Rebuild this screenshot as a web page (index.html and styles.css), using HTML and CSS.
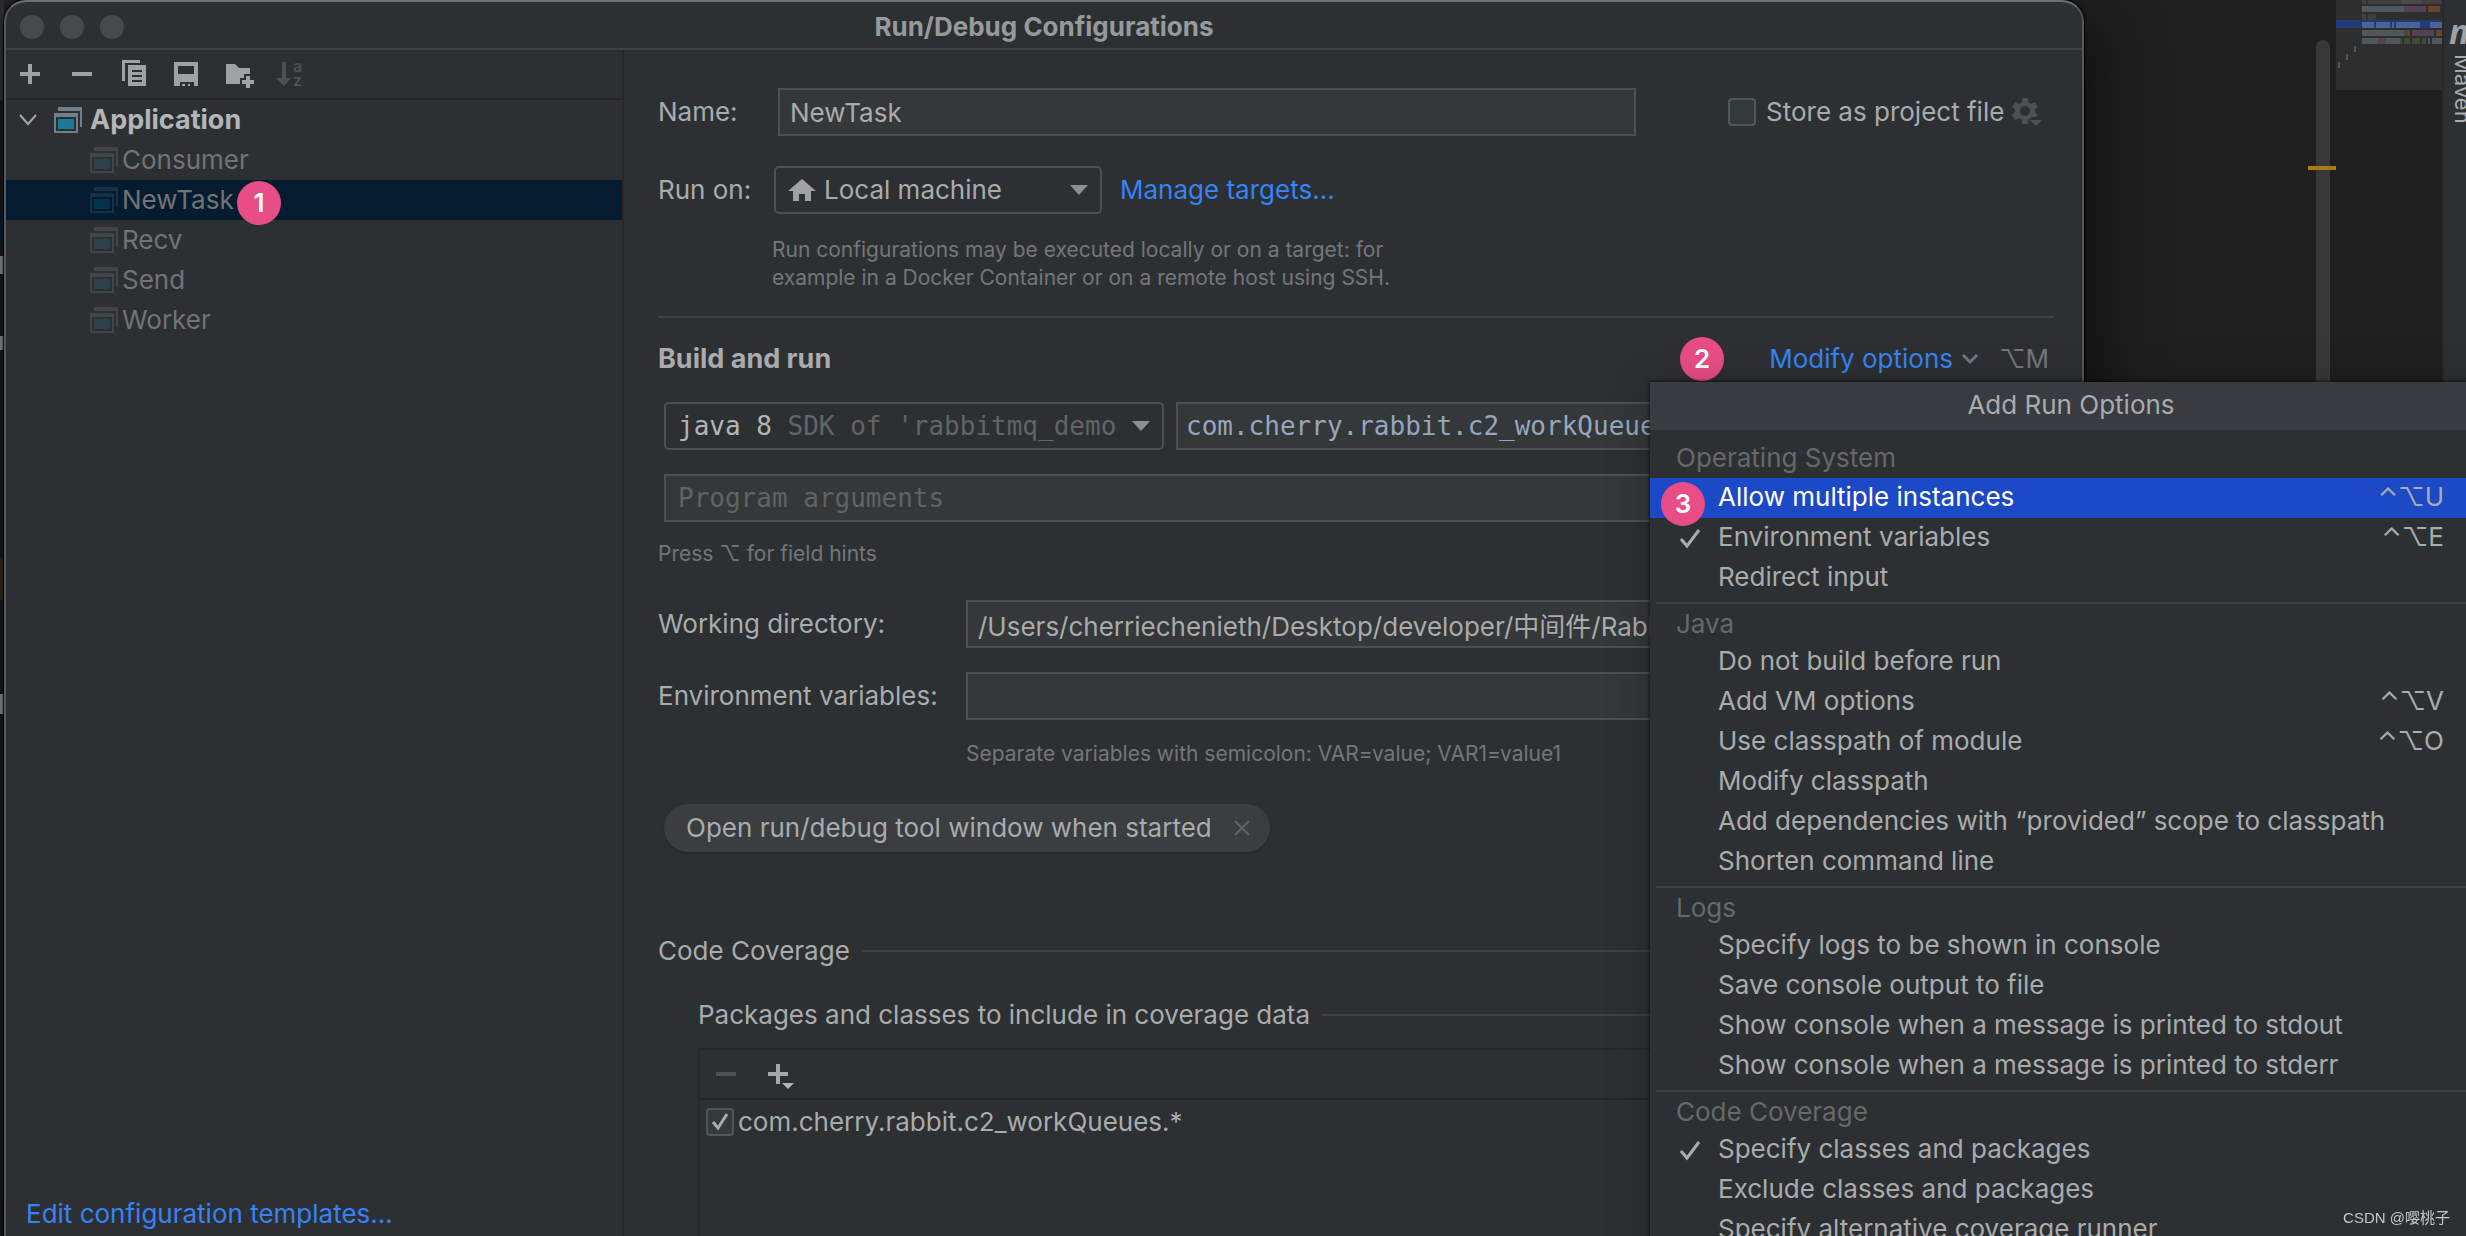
FILE: index.html
```html
<!DOCTYPE html>
<html lang="en">
<head>
<meta charset="utf-8">
<title>Run/Debug Configurations</title>
<link rel="stylesheet" href="styles.css">
</head>
<body>
<svg class="defs" aria-hidden="true">
  <symbol id="app" viewBox="0 0 28 26">
    <path class="frame" d="M4 0h24v20h-2V4H4z"/>
    <path class="frame" fill-rule="evenodd" d="M0 6h24v20H0zM2 10v14h20V10z"/>
    <path class="pane" d="M4 12h16v10H4z"/>
  </symbol>
  <symbol id="arrow" viewBox="0 0 18 10"><path fill="currentColor" d="M0 0h18L9 10z"/></symbol>
  <symbol id="tick" viewBox="0 0 20 20"><path fill="none" stroke="currentColor" stroke-width="3" d="M1 10l6 7L19 1"/></symbol>
</svg>
<div class="desktop">
  <div class="editor-left"></div>
  <main class="dialog">
    <header class="titlebar">
      <div class="lights"><i></i><i></i><i></i></div>
      <h1>Run/Debug Configurations</h1>
    </header>
    <div class="columns">
      <aside class="sidebar">
        <div class="toolbar">
          <button type="button" aria-label="Add"><svg width="28" height="28" viewBox="0 0 28 28"><path fill="#9fa1a3" d="M12 4h4v8h8v4h-8v8h-4v-8H4v-4h8z"/></svg></button>
          <button type="button" aria-label="Remove"><svg width="28" height="28" viewBox="0 0 28 28"><path fill="#9fa1a3" d="M4 12h20v4H4z"/></svg></button>
          <button type="button" aria-label="Copy"><svg width="28" height="28" viewBox="0 0 28 28"><path fill="#9fa1a3" d="M2 0h18v3H5v18H2z"/><path fill="#9fa1a3" fill-rule="evenodd" d="M8 5h18v21H8zM12 10v2h10v-2zM12 15v2h10v-2zM12 20v2h10v-2z"/></svg></button>
          <button type="button" aria-label="Save"><svg width="28" height="28" viewBox="0 0 28 28"><path fill="#9fa1a3" fill-rule="evenodd" d="M2 2h24v24h-4v-4H8v4H2zM6 6v8h16V6z"/><path fill="#9fa1a3" d="M10 24h3v2h-3zM16 24h2v2h-2z"/></svg></button>
          <button type="button" aria-label="New folder"><svg width="28" height="28" viewBox="0 0 28 28"><path fill="#9fa1a3" d="M2 4h9l4 4h11v6h-6v4h-4v6H2z"/><path fill="#9fa1a3" d="M22 16h4v4h4v4h-4v4h-4v-4h-4v-4h4z"/></svg></button>
          <button type="button" aria-label="Sort" disabled><svg width="28" height="28" viewBox="0 0 28 28"><path fill="#4d4f50" d="M6 2h4v16h5L8 26 0 18h6z"/><text x="17" y="12" class="sort-letter">a</text><text x="17" y="26" class="sort-letter">z</text></svg></button>
        </div>
        <ul class="tree">
          <li class="root"><svg class="chev" width="18" height="12" viewBox="0 0 18 12"><path fill="none" stroke="#a5a7a8" stroke-width="2" d="M1 1l8 9 8-9"/></svg><svg class="icon" width="28" height="26"><use href="#app"/></svg><span>Application</span></li>
          <li><svg class="icon" width="28" height="26"><use href="#app"/></svg><span>Consumer</span></li>
          <li class="selected"><svg class="icon" width="28" height="26"><use href="#app"/></svg><span>NewTask</span><b class="badge">1</b></li>
          <li><svg class="icon" width="28" height="26"><use href="#app"/></svg><span>Recv</span></li>
          <li><svg class="icon" width="28" height="26"><use href="#app"/></svg><span>Send</span></li>
          <li><svg class="icon" width="28" height="26"><use href="#app"/></svg><span>Worker</span></li>
        </ul>
        <a class="templates" href="#templates">Edit configuration templates…</a>
      </aside>
      <form class="settings">
        <div class="row">
          <label class="short" for="name">Name:</label>
          <input class="field name" id="name" type="text" value="NewTask">
          <div class="store">
            <input class="check" type="checkbox" id="store"><label for="store">Store as project file</label>
            <svg width="30" height="30" viewBox="0 0 30 30"><path fill="#4d4f50" fill-rule="evenodd" d="M10 1h6v4l3 2 4-2 3 5-3 2v3l3 3-2 2h-4l-1 1-3 2v4h-6v-4l-3-2-4 2-3-5 3-3v-3L0 10l3-5 4 2 3-2zM13 9a5 5 0 1 0 0 10 5 5 0 0 0 0-10z"/><path fill="#4d4f50" d="M18 23h12l-6 6z"/></svg>
          </div>
        </div>
        <div class="row run-on">
          <label class="short" for="target">Run on:</label>
          <div class="combo target">
            <svg width="28" height="22" viewBox="0 0 28 22"><path fill="#9fa1a3" d="M14 0l14 12h-5v10h-6v-7h-6v7H5V12H0z"/></svg>
            <select id="target"><option>Local machine</option></select>
            <svg class="arrow" width="18" height="10"><use href="#arrow"/></svg>
          </div>
          <a href="#targets">Manage targets…</a>
        </div>
        <p class="help target-help">Run configurations may be executed locally or on a target: for example in a Docker Container or on a remote host using SSH.</p>
        <hr>
        <div class="section">
          <h2>Build and run</h2>
          <b class="badge">2</b>
          <button class="modify" type="button">Modify options <svg width="16" height="10" viewBox="0 0 16 10"><path fill="none" stroke="#6b7680" stroke-width="3" d="M1 1l7 7 7-7"/></svg></button>
          <kbd>⌥M</kbd>
        </div>
        <div class="row sdk">
          <div class="combo jdk">
            <select aria-label="JDK"><option>java 8</option></select>
            <span class="sdk-note">SDK of 'rabbitmq_demo</span>
            <svg class="arrow" width="18" height="10"><use href="#arrow"/></svg>
          </div>
          <input class="field main-class" type="text" aria-label="Main class" value="com.cherry.rabbit.c2_workQueues.NewTask">
        </div>
        <input class="field args" type="text" aria-label="Program arguments" placeholder="Program arguments">
        <p class="help hints">Press ⌥ for field hints</p>
        <div class="row">
          <label class="long" for="wd">Working directory:</label>
          <input class="field" id="wd" type="text" value="/Users/cherriechenieth/Desktop/developer/中间件/RabbitMQ">
        </div>
        <div class="row env">
          <label class="long" for="env">Environment variables:</label>
          <input class="field" id="env" type="text">
        </div>
        <p class="help env-help">Separate variables with semicolon: VAR=value; VAR1=value1</p>
        <div class="pill">Open run/debug tool window when started
          <button type="button" aria-label="Remove option"><svg width="16" height="16" viewBox="0 0 16 16"><path fill="none" stroke="#5a6468" stroke-width="2" d="M1 1l14 14M15 1L1 15"/></svg></button>
        </div>
        <h3 class="ruled coverage">Code Coverage</h3>
        <div class="inset">
          <h3 class="ruled">Packages and classes to include in coverage data</h3>
          <div class="list">
            <div class="list-tools">
              <button type="button" aria-label="Remove" disabled><svg width="28" height="28" viewBox="0 0 28 28"><path fill="#4d4f50" d="M4 12h20v4H4z"/></svg></button>
              <button type="button" aria-label="Add"><svg width="34" height="28" viewBox="0 0 34 28"><path fill="#a5a7a8" d="M12 4h4v8h8v4h-8v8h-4v-8H4v-4h8z"/><path fill="#b5b5b5" d="M18 23h12l-6 6z"/></svg></button>
            </div>
            <div class="list-row"><input class="check" type="checkbox" id="pkg" checked><label for="pkg">com.cherry.rabbit.c2_workQueues.*</label></div>
          </div>
        </div>
      </form>
    </div>
    <section class="popup">
      <h2>Add Run Options</h2>
      <h3 class="group first">Operating System</h3>
      <ul>
        <li class="active"><b class="badge">3</b><button type="button">Allow multiple instances</button><kbd>⌃⌥U</kbd></li>
        <li><svg class="mark" width="20" height="20"><use href="#tick"/></svg><button type="button">Environment variables</button><kbd>⌃⌥E</kbd></li>
        <li><button type="button">Redirect input</button></li>
      </ul>
      <h3 class="group">Java</h3>
      <ul>
        <li><button type="button">Do not build before run</button></li>
        <li><button type="button">Add VM options</button><kbd>⌃⌥V</kbd></li>
        <li><button type="button">Use classpath of module</button><kbd>⌃⌥O</kbd></li>
        <li><button type="button">Modify classpath</button></li>
        <li><button type="button">Add dependencies with “provided” scope to classpath</button></li>
        <li><button type="button">Shorten command line</button></li>
      </ul>
      <h3 class="group">Logs</h3>
      <ul>
        <li><button type="button">Specify logs to be shown in console</button></li>
        <li><button type="button">Save console output to file</button></li>
        <li><button type="button">Show console when a message is printed to stdout</button></li>
        <li><button type="button">Show console when a message is printed to stderr</button></li>
      </ul>
      <h3 class="group">Code Coverage</h3>
      <ul>
        <li><svg class="mark" width="20" height="20"><use href="#tick"/></svg><button type="button">Specify classes and packages</button></li>
        <li><button type="button">Exclude classes and packages</button></li>
        <li><button type="button">Specify alternative coverage runner</button></li>
      </ul>
    </section>
  </main>
  <div class="editor-right">
    <div class="scroll"><i class="thumb"></i><i class="warning"></i></div>
    <svg class="minimap" width="106" height="90" viewBox="0 0 106 90">
      <path fill="#2e2e2e" d="M0 0h106v90H0z"/>
      <path fill="#223a78" d="M0 20h106v8H0z"/>
      <path fill="#3f3f3f" d="M26 0h4v4h-4zM32 0h34v4H32zM86 0h20v4H86zM26 14h4v6h-4zM32 14h8v6h-8z"/>
      <path fill="#4a4a4a" d="M66 0h20v4H66z"/>
      <path fill="#50575d" d="M26 6h42v6H26zM26 30h42v6H26zM26 38h16v6H26zM50 38h14v6H50zM92 38h2v6h-2zM96 38h10v6H96zM18 46h2v6h-2zM10 54h2v6h-2zM2 62h2v6H2z"/>
      <path fill="#4b6397" d="M26 22h12v6H26zM40 22h14v6H40zM56 22h2v6h-2zM60 22h24v6H60zM94 22h12v6H94z"/>
      <path fill="#524157" d="M68 6h22v6H68zM76 30h22v6H76zM42 38h8v6h-8z"/>
      <path fill="#6b432b" d="M92 6h12v6H92zM72 30h2v6h-2zM100 30h6v6h-6z"/>
      <path fill="#414b38" d="M68 30h4v6h-4zM64 38h2v6h-2zM68 38h6v6h-6zM76 38h8v6h-8zM86 38h4v6h-4z"/>
    </svg>
    <div class="stripe"><span class="maven-m">m</span><span class="maven">Maven</span></div>
  </div>
</div>
<div class="watermark">CSDN @嘤桃子</div>
</body>
</html>
```
FILE: styles.css
```css
* { box-sizing: border-box; }
html, body { height: 100%; }
body {
  margin: 0;
  overflow: hidden;
  background: #1f1f1f;
  color: #a9abac;
  font: 26px/32px Inter, "Noto Sans CJK SC", "DejaVu Sans", sans-serif;
}
h1, h2, h3, p, ul { margin: 0; padding: 0; }
ul { list-style: none; }
button, input, select, kbd { font: inherit; color: inherit; }
button { display: flex; align-items: center; padding: 0; border: 0; background: none; white-space: nowrap; }
a { color: #3583f7; text-decoration: none; }
svg { display: block; flex: none; overflow: visible; }
.defs { position: absolute; width: 0; height: 0; }

.desktop { display: flex; height: 100vh; }
.editor-left {
  flex: none;
  width: 4px;
  background: linear-gradient(#2a2c2d 0 100px, #151617 100px 204px, #07182a 204px 244px, #151617 244px 256px, #7e7f80 256px 274px, #151617 274px 336px, #7e7f80 336px 350px, #151617 350px 558px, #2a241a 558px 600px, #151617 600px 694px, #7e7f80 694px 714px, #151617 714px);
}

/* dialog window */
.dialog {
  position: relative;
  z-index: 1;
  display: flex;
  flex-direction: column;
  flex: 1;
  min-width: 0;
  border: 2px solid #545759;
  border-top-color: #6c7072;
  border-bottom: 0;
  border-radius: 22px 22px 0 0;
  background: #2d3033;
  box-shadow: 0 0 2px 1px #000, 20px 20px 60px rgba(0, 0, 0, .45);
}
.titlebar {
  display: grid;
  grid-template-columns: 1fr auto 1fr;
  align-items: center;
  flex: none;
  height: 48px;
  padding: 4px 14px 0;
  border-bottom: 2px solid #424141;
}
.titlebar h1 { font-size: 26px; font-weight: 700; line-height: 32px; color: #98999b; }
.lights { display: flex; gap: 16px; }
.lights i { width: 24px; height: 24px; border-radius: 50%; background: #474a4b; }
.columns { display: flex; flex: 1; min-height: 0; }

/* configuration tree */
.sidebar {
  display: flex;
  flex-direction: column;
  flex: none;
  width: 618px;
  border-right: 2px solid #292625;
}
.toolbar {
  display: flex;
  align-items: center;
  gap: 24px;
  height: 50px;
  padding-left: 10px;
  border-bottom: 2px solid #292625;
}
.sort-letter { font: 600 16px Inter, sans-serif; fill: #4d4f50; }
.tree { flex: 1; }
.tree li { position: relative; display: flex; align-items: center; gap: 4px; height: 40px; padding-left: 84px; color: #717375; }
.tree .root { gap: 8px; padding-left: 13px; color: #b4b5b6; font-size: 27px; font-weight: 700; }
.chev { margin-right: 9px; }
.icon { --frame: #414547; --pane: #2b424d; }
.root .icon { --frame: #6f808a; --pane: #1b7899; }
.selected .icon { --frame: #173047; --pane: #02334d; }
.frame { fill: var(--frame); }
.pane { fill: var(--pane); }
.tree .selected { background: #051c30; }
.tree .badge { position: absolute; z-index: 1; left: 231px; top: 1px; }
.templates { padding: 0 20px 6px; }
.badge {
  flex: none;
  width: 44px;
  height: 44px;
  border-radius: 50%;
  background: #e84d85;
  color: #fff;
  font-weight: 600;
  line-height: 44px;
  text-align: center;
}

/* settings form */
.settings { flex: 1; min-width: 0; overflow: hidden; padding: 38px 28px 0 34px; }
.row { display: flex; align-items: center; }
.short { flex: none; width: 116px; }
.long { flex: none; width: 308px; }
.field {
  flex: 1;
  min-width: 0;
  height: 48px;
  padding: 0 10px;
  border: 2px solid #4f4f4e;
  border-radius: 0;
  background: #353839;
  outline: 0;
}
.name { margin-left: 4px; }
.store { display: flex; align-items: center; gap: 10px; width: 326px; margin-left: 92px; white-space: nowrap; }
.store svg { margin-left: -2px; }
.check {
  appearance: none;
  flex: none;
  width: 28px;
  height: 28px;
  margin: 0;
  border: 2px solid #535657;
  border-radius: 4px;
  background: #323a3c;
}
.check:checked { background: #323a3c url("data:image/svg+xml,%3Csvg xmlns='http://www.w3.org/2000/svg' viewBox='0 0 24 24'%3E%3Cpath fill='none' stroke='%23a9abac' stroke-width='3' d='M5 12l5 6L19 4'/%3E%3C/svg%3E"); }
.combo {
  display: flex;
  align-items: center;
  height: 48px;
  border: 2px solid #4f4f4e;
  border-radius: 5px;
}
.combo select { appearance: none; padding: 0; border: 0; background: none; outline: 0; }
.arrow { margin-left: auto; color: #8c8e90; }
.run-on { margin-top: 30px; }
.target { width: 328px; margin-right: 18px; padding: 0 12px; }
.target select { margin-left: 8px; }
.help { color: #747678; font-size: 21px; line-height: 28px; }
.target-help { width: 660px; margin: 22px 0 0 114px; }
hr { height: 2px; margin: 24px 0 25px; border: 0; background: #424141; }
.section { display: flex; align-items: center; height: 32px; }
.section h2 { flex: 1; font-size: 27px; font-weight: 700; }
.section .badge { margin-right: 45px; }
.modify { gap: 9px; color: #3583f7; }
.section kbd { width: 55px; margin: 0 0 0 21px; color: #747678; }
.sdk { gap: 12px; margin: 27px 0 24px 6px; }
.combo.jdk { flex: none; width: 500px; padding: 0 12px; }
.jdk, .main-class, .args { font-family: "DejaVu Sans Mono", monospace; font-size: 26px; }
.jdk select { width: 7ch; color: #b4b5b6; }
.sdk-note { color: #626465; white-space: nowrap; }
.main-class { padding: 0 8px; color: #94a7be; }
.args { display: block; width: calc(100% - 6px); margin-left: 6px; padding: 0 12px; }
.args::placeholder { color: #606364; opacity: 1; }
.hints { margin: 18px 0 32px; }
.env { margin-top: 24px; }
.env-help { margin: 20px 0 36px 308px; }
.pill {
  display: flex;
  align-items: center;
  justify-content: space-between;
  width: 606px;
  height: 48px;
  margin-left: 6px;
  padding: 0 20px 0 22px;
  border-radius: 24px;
  background: #3b3e40;
  box-shadow: 0 2px 2px #28292a;
  white-space: nowrap;
}
.ruled { display: flex; align-items: center; gap: 12px; font-size: 26px; font-weight: 400; white-space: nowrap; }
.ruled::after { content: ""; flex: 1; height: 2px; background: #424141; }
.coverage { margin: 83px 0 32px; }
.inset { margin-left: 40px; }
.list { height: 400px; margin-top: 17px; border: 2px solid #292625; }
.list-tools { display: flex; align-items: center; gap: 24px; height: 50px; padding-left: 12px; border-bottom: 2px solid #292625; }
.list-row { display: flex; align-items: center; gap: 4px; height: 44px; padding-left: 6px; }

/* run options menu, running past the dialog's right edge */
.popup {
  position: absolute;
  top: 380px;
  right: -410px;
  width: 842px;
  min-height: 900px;
  background: #2d3033;
  box-shadow: 0 0 3px 1px rgba(0, 0, 0, .55), 0 6px 40px rgba(0, 0, 0, .25);
}
.popup h2 { height: 48px; background: #393b40; font-size: 26px; font-weight: 400; line-height: 46px; text-align: center; }
.group { height: 40px; margin: 4px 0 0 6px; padding: 4px 0 0 20px; border-top: 2px solid #424141; font-size: 26px; font-weight: 400; line-height: 32px; color: #66686a; }
.group.first { margin-top: 0; height: 48px; padding-top: 12px; border: 0; }
.popup li { position: relative; display: flex; align-items: center; height: 40px; padding: 0 48px 2px 68px; }
.popup li kbd { margin-left: auto; }
.popup .active { background: #1c4ac6; }
.active button { color: #fff; }
.mark { position: absolute; left: 30px; top: 11px; }
.popup .badge { position: absolute; z-index: 1; left: 11px; top: 4px; }

/* editor behind the dialog */
.editor-right { display: flex; flex: none; width: 382px; padding-left: 224px; }
.scroll { position: relative; width: 28px; padding: 40px 6px 0 8px; }
.thumb { display: block; height: 100%; border-radius: 7px; background: #383838; }
.warning { position: absolute; left: 0; top: 166px; width: 28px; height: 4px; background: #a87a12; }
.stripe { display: flex; flex-direction: column; align-items: flex-start; width: 24px; overflow: hidden; border-left: 2px solid #292929; background: #2d3033; }
.maven-m { padding: 14px 0 0 5px; font: italic 700 34px/34px "Open Sans", sans-serif; color: #9fa1a3; }
.maven { margin: 6px 0 0 4px; font-size: 22px; line-height: 30px; writing-mode: vertical-rl; }
.watermark { position: fixed; z-index: 2; right: 16px; bottom: 6px; color: #c4c5c6; font: 15px/24px "Liberation Sans", "Noto Sans CJK SC", sans-serif; }
```
